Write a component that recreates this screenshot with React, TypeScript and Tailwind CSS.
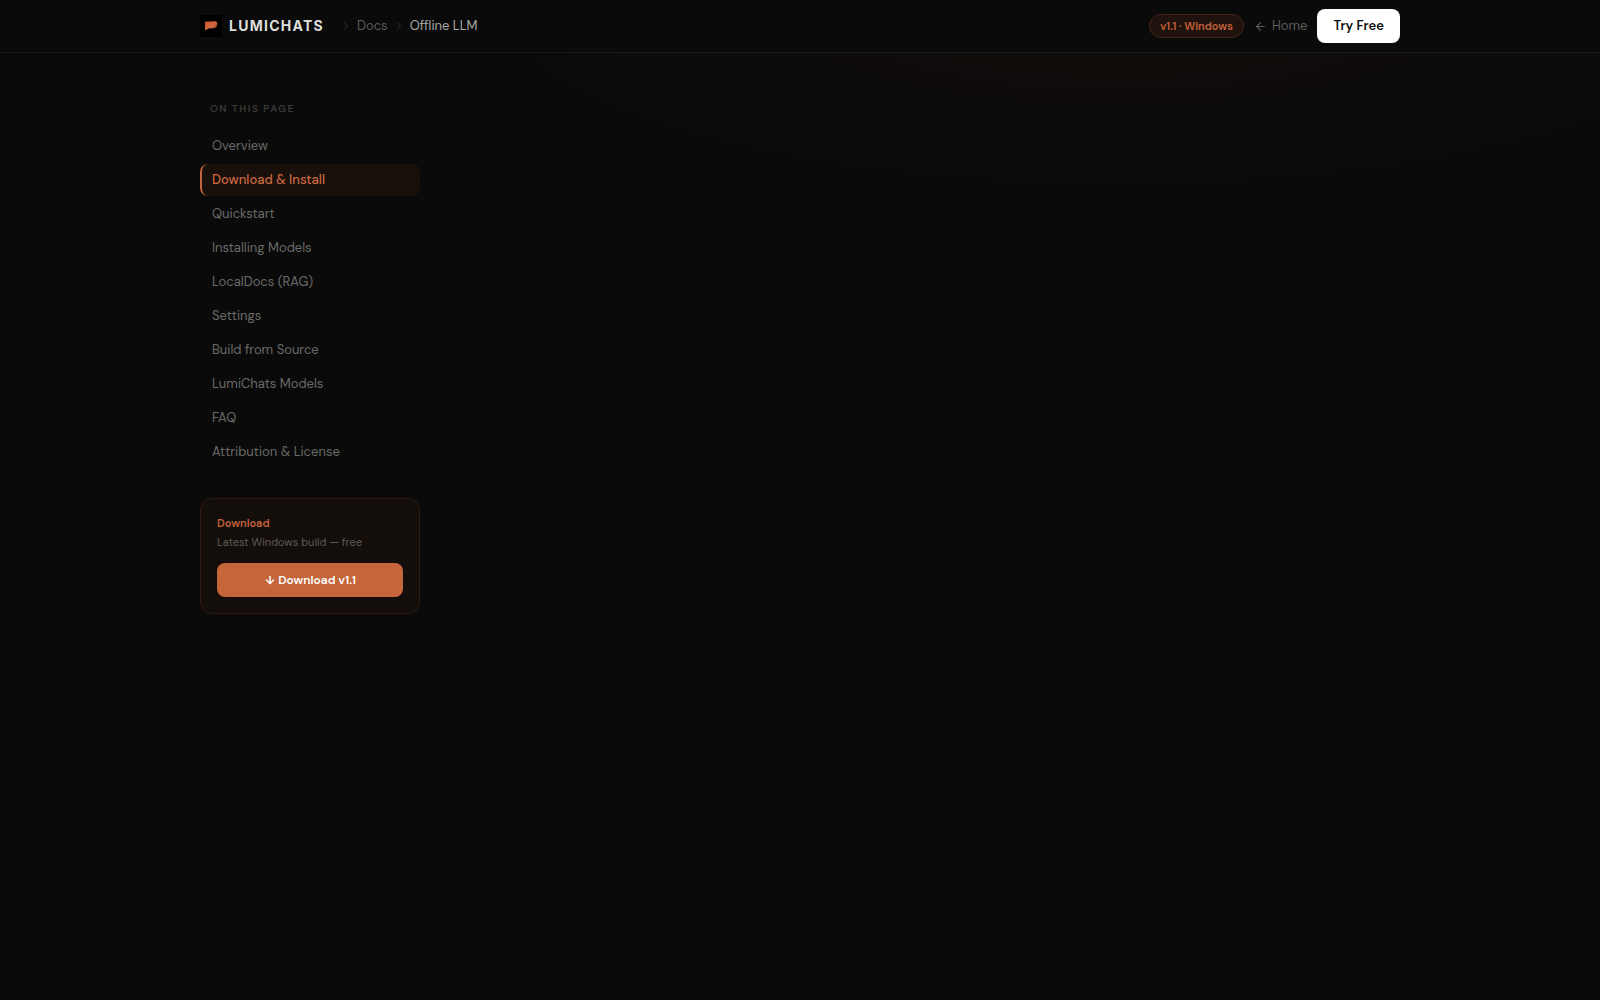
import React, { useState } from "react"
import { ArrowLeft, ArrowDown, ChevronRight } from "lucide-react"

type Section = {
  id: string,
  label: string
}

const sections: Section[] = [
  { id: "overview", label: "Overview" },
  { id: "download", label: "Download & Install" },
  { id: "quickstart", label: "Quickstart" },
  { id: "models", label: "Installing Models" },
  { id: "localdocs", label: "LocalDocs (RAG)" },
  { id: "settings", label: "Settings" },
  { id: "build", label: "Build from Source" },
  { id: "lumichats-models", label: "LumiChats Models" },
  { id: "faq", label: "FAQ" },
  { id: "license", label: "Attribution & License" },
]

const Logo = () => (
  <svg viewBox="0 0 22 22" className="size-[22px]" aria-hidden="true">
    <defs>
      <linearGradient id="flag" x1="0" y1="0" x2="1" y2="1">
        <stop offset="0" stopColor="#d9501f" />
        <stop offset="0.55" stopColor="#d06a45" />
        <stop offset="1" stopColor="#7a3219" />
      </linearGradient>
    </defs>
    <rect width="22" height="22" fill="#000" />
    <path d="M5 6.8 L15 6.2 Q17.2 6.2 17.2 8.4 Q17.2 12.8 13.6 13.2 L8.4 13.6 L5.2 15.4 Z" fill="url(#flag)" />
  </svg>
)

const Header = () => (
  <header className="border-b border-[#1b1b1a] bg-[#0a0a0a]/85">
    <div className="mx-auto flex h-[52px] max-w-[1200px] items-center justify-between">
      <div className="flex items-center">
        <a href="#" className="flex items-center gap-[7px]">
          <Logo />
          <span className="font-['Inter',sans-serif] text-sm font-bold tracking-[0.09em] text-[#dededc]">LUMICHATS</span>
        </a>
        <nav aria-label="Breadcrumb" className="ml-4 flex items-center gap-[5px] text-[13px]">
          <ChevronRight className="size-3 text-[#353533]" />
          <a href="#docs" className="text-[#5c5c5a]">Docs</a>
          <ChevronRight className="size-3 text-[#353533]" />
          <span className="text-[#a8a8a5]">Offline LLM</span>
        </nav>
      </div>
      <div className="flex items-center gap-2.5">
        <span className="flex h-6 items-center rounded-full border border-[#44251a] bg-[#20120d] px-2.5 text-[11px] font-semibold text-[#c4623a]">
          v1.1 · Windows
        </span>
        <a href="#home" className="flex items-center gap-[5px] text-[13px] text-[#5c5c5a]">
          <ArrowLeft className="size-[13px]" />
          Home
        </a>
        <button className="flex h-[34px] items-center rounded-lg bg-white px-4 text-[13px] font-semibold text-[#0a0a0a]">
          Try Free
        </button>
      </div>
    </div>
  </header>
)

const DownloadCard = () => (
  <div className="mt-[30px] rounded-xl border border-[#30190f] bg-[#140e0a] p-4">
    <p className="text-[11px] leading-4 font-semibold text-[#c4623a]">Download</p>
    <p className="mt-[3px] text-[11px] leading-4 text-[#5f5b58]">Latest Windows build — free</p>
    <a
      href="#download"
      className="mt-[13px] flex h-[34px] items-center justify-center gap-0.5 rounded-lg bg-[#c4653a] text-xs font-semibold text-white"
    >
      <ArrowDown className="size-3" strokeWidth={3} />
      Download v1.1
    </a>
  </div>
)

const App = () => {
  const [active, setActive] = useState("download")

  return (
    <div className="min-h-screen bg-[#0a0a0a] bg-[radial-gradient(ellipse_640px_190px_at_70%_0,#120d0b,#0a0a0a)] font-['DM_Sans','Inter',sans-serif]">
      <Header />
      <div className="mx-auto max-w-[1200px] pt-12">
        <aside className="w-[220px]">
          <p className="px-2.5 text-[10px] leading-4 font-semibold tracking-[0.15em] text-[#3a3a38] uppercase">
            On this page
          </p>
          <nav className="mt-[13px] flex flex-col gap-0.5">
            {sections.map((section) => (
              <a
                key={section.id}
                href={"#" + section.id}
                onClick={() => setActive(section.id)}
                className={
                  active === section.id
                    ? "rounded-lg border-l-2 border-[#c4623a] bg-[#19100c] px-2.5 py-1.5 text-[13px] leading-5 font-medium text-[#cc6840]"
                    : "rounded-lg border-l-2 border-transparent px-2.5 py-1.5 text-[13px] leading-5 text-[#6a6a68]"
                }
              >
                {section.label}
              </a>
            ))}
          </nav>
          <DownloadCard />
        </aside>
      </div>
    </div>
  )
}

export default App
